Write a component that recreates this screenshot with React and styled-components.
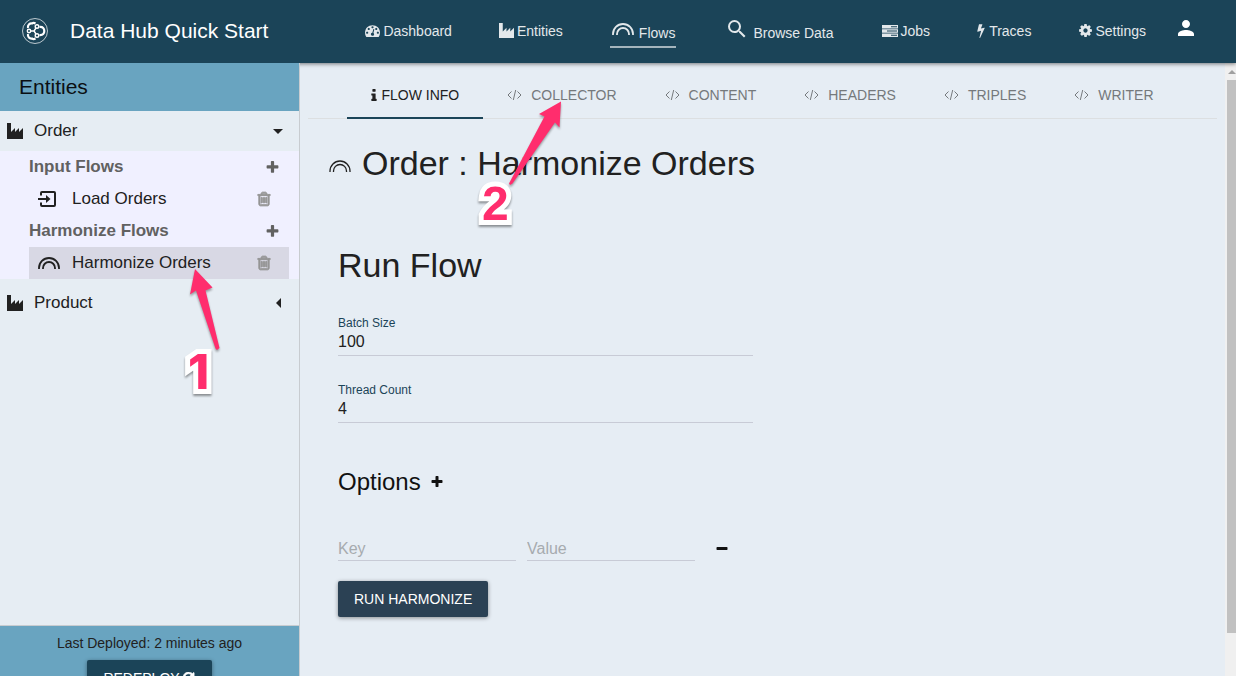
import React from 'react';
import styled, { createGlobalStyle, css } from 'styled-components';
import { MdSearch, MdPerson } from 'react-icons/md';

const GlobalStyle = createGlobalStyle`
  *, *::before, *::after { box-sizing: border-box; }
  body {
    margin: 0;
    background: #e6edf4;
    color: #212121;
    font-family: "Liberation Sans", Arial, sans-serif;
    font-size: 14px;
    overflow: hidden;
  }
  h1, h2, h3, p, ul { margin: 0; padding: 0; font-weight: 400; }
  ul { list-style: none; }
  a { color: inherit; text-decoration: none; }
  button { border: 0; padding: 0; background: none; color: inherit; font: inherit; cursor: pointer; }
  svg { display: block; flex: none; fill: currentColor; }
`;

/* ---------- icons ---------- */

const GLYPHS = {
  refresh:
    'M1511 928q0 5-1 7-64 268-268 434.5t-478 166.5q-146 0-282.5-55t-243.5-157l-129 129q-19 19-45 19t-45-19-19-45v-448q0-26 19-45t45-19h448q26 0 45 19t19 45-19 45l-137 137q71 66 161 102t187 36q134 0 250-65t186-179q11-17 53-117 8-23 30-23h192q13 0 22.5 9.5t9.5 22.5zm25-800v448q0 26-19 45t-45 19h-448q-26 0-45-19t-19-45 19-45l138-138q-148-137-349-137-134 0-250 65t-186 179q-11 17-53 117-8 23-30 23h-199q-13 0-22.5-9.5t-9.5-22.5v-7q65-268 270-434.5t480-166.5q146 0 284 55.5t245 156.5l130-129q19-19 45-19t45 19 19 45z',
  cog:
    'M1152 896q0-106-75-181t-181-75-181 75-75 181 75 181 181 75 181-75 75-181zm512-109v222q0 12-8 23t-20 13l-185 28q-19 54-39 91 35 50 107 138 10 12 10 25t-9 23q-27 37-99 108t-94 71q-12 0-26-9l-138-108q-44 23-91 38-16 136-29 186-7 28-36 28h-222q-14 0-24.5-8.5t-11.5-21.5l-28-184q-49-16-90-37l-141 107q-10 9-25 9-14 0-25-11-126-114-165-168-7-10-7-23 0-12 8-23 15-21 51-66.5t54-70.5q-27-50-41-99l-183-27q-13-2-21-12.5t-8-23.5v-222q0-12 8-23t19-13l186-28q14-46 39-92-40-57-107-138-10-12-10-24 0-10 9-23 26-36 98.5-107.5t94.5-71.5q13 0 26 10l138 107q44-23 91-38 16-136 29-186 7-28 36-28h222q14 0 24.5 8.5t11.5 21.5l28 184q49 16 90 37l142-107q9-9 24-9 13 0 25 10 129 119 165 170 7 8 7 22 0 12-8 23-15 21-51 66.5t-54 70.5q26 50 41 98l183 28q13 2 21 12.5t8 23.5z',
  bolt:
    'M1333 566q18 20 7 44l-540 1157q-13 25-42 25-4 0-14-2-17-5-25.5-19t-4.5-30l197-808-406 101q-4 1-12 1-18 0-31-11-18-15-13-39l201-825q4-14 16-23t28-9h328q19 0 32 12.5t13 29.5q0 8-5 18l-171 463 396-98q8-2 12-2 19 0 34 15z',
  trash:
    'M704 736v576q0 14-9 23t-23 9h-64q-14 0-23-9t-9-23v-576q0-14 9-23t23-9h64q14 0 23 9t9 23zm256 0v576q0 14-9 23t-23 9h-64q-14 0-23-9t-9-23v-576q0-14 9-23t23-9h64q14 0 23 9t9 23zm256 0v576q0 14-9 23t-23 9h-64q-14 0-23-9t-9-23v-576q0-14 9-23t23-9h64q14 0 23 9t9 23zm128 724v-948h-896v948q0 22 7 40.5t14.5 27 10.5 8.5h832q3 0 10.5-8.5t14.5-27 7-40.5zm-672-1076h448l-48-117q-7-9-17-11h-317q-10 2-17 11zm928 32v64q0 14-9 23t-23 9h-96v948q0 83-47 143.5t-113 60.5h-832q-66 0-113-58.5t-47-141.5v-952h-96q-14 0-23-9t-9-23v-64q0-14 9-23t23-9h309l70-167q15-37 54-63t79-26h320q40 0 79 26t54 63l70 167h309q14 0 23 9t9 23z',
  plus:
    'M1600 736v192q0 40-28 68t-68 28h-416v416q0 40-28 68t-68 28h-192q-40 0-68-28t-28-68v-416h-416q-40 0-68-28t-28-68v-192q0-40 28-68t68-28h416v-416q0-40 28-68t68-28h192q40 0 68 28t28 68v416h416q40 0 68 28t28 68z',
  minus:
    'M1600 736v192q0 40-28 68t-68 28h-1216q-40 0-68-28t-28-68v-192q0-40 28-68t68-28h1216q40 0 68 28t28 68z',
  dashboard:
    'M384 1152q0-53-37.5-90.5t-90.5-37.5-90.5 37.5-37.5 90.5 37.5 90.5 90.5 37.5 90.5-37.5 37.5-90.5zm192-448q0-53-37.5-90.5t-90.5-37.5-90.5 37.5-37.5 90.5 37.5 90.5 90.5 37.5 90.5-37.5 37.5-90.5zm428 481l101-382q6-26-7.5-48.5t-38.5-29.5-48 6.5-30 39.5l-101 382q-60 5-107 43.5t-63 98.5q-20 77 20 146t117 89 146-20 89-117q16-60-6-117t-72-91zm660-33q0-53-37.5-90.5t-90.5-37.5-90.5 37.5-37.5 90.5 37.5 90.5 90.5 37.5 90.5-37.5 37.5-90.5zm-640-640q0-53-37.5-90.5t-90.5-37.5-90.5 37.5-37.5 90.5 37.5 90.5 90.5 37.5 90.5-37.5 37.5-90.5zm448 192q0-53-37.5-90.5t-90.5-37.5-90.5 37.5-37.5 90.5 37.5 90.5 90.5 37.5 90.5-37.5 37.5-90.5zm320 448q0 261-141 483-19 29-54 29h-1402q-35 0-54-29-141-221-141-483 0-182 71-348t191-286 286-191 348-71 348 71 286 191 191 286 71 348z',
  info:
    'M1216 1344v128q0 26-19 45t-45 19h-512q-26 0-45-19t-19-45v-128q0-26 19-45t45-19h64v-384h-64q-26 0-45-19t-19-45v-128q0-26 19-45t45-19h384q26 0 45 19t19 45v576h64q26 0 45 19t19 45zm-128-1152v192q0 26-19 45t-45 19h-256q-26 0-45-19t-19-45v-192q0-26 19-45t45-19h256q26 0 45 19t19 45z',
};

const Glyph = ({ name, size = 14, box = '0 0 1792 1792', width = size, bold = 0 }) => (
  <svg width={width} height={size} viewBox={box} aria-hidden="true">
    <path d={GLYPHS[name]} stroke={bold ? 'currentColor' : 'none'} strokeWidth={bold} />
  </svg>
);

const IndustryIcon = ({ size }) => (
  <svg width={size} height={size} viewBox="0 0 16 16" aria-hidden="true">
    <path d="M0 0h4v9l4-4v4l4-4v4l4-4v11H0z" />
  </svg>
);

const ServerIcon = () => (
  <svg width="16" height="14" viewBox="0 0 16 14" aria-hidden="true">
    <path
      fillRule="evenodd"
      d="M0 1h16v3.500H0zM0 5.250h16v3.500H0zM0 9.500h16v3.500H0zM9 2.300v.9h6v-.9zM5 6.550v.9h10v-.9zM9 10.800v.9h6v-.9z"
    />
  </svg>
);

const ArcsIcon = ({ thin = false }) => (
  <svg width="22" height="12" viewBox="0 0 22 12" aria-hidden="true">
    <path
      d={thin ? 'M1 12V11a10 10 0 0 1 20 0V12M4.500 12V11a6.500 6.500 0 0 1 13 0V12' : 'M1 12V11a10 10 0 0 1 20 0V12M5 12V11a6 6 0 0 1 12 0V12'}
      fill="none"
      stroke="currentColor"
      strokeWidth={thin ? 1.3 : 1.8}
    />
  </svg>
);

const ImportIcon = () => (
  <svg width="19" height="16" viewBox="0 0 19 16" aria-hidden="true">
    <path
      d="M3 4.500V2q0-1 1-1h12q1 0 1 1v12q0 1-1 1H4q-1 0-1-1v-2.500M0 8h10"
      fill="none"
      stroke="currentColor"
      strokeWidth="2"
    />
    <path d="M8 4l4.500 4L8 12z" />
  </svg>
);

const CodeIcon = () => (
  <svg width="15" height="10" viewBox="0 0 15 10" aria-hidden="true">
    <path d="M4.500 1.500L1 5l3.500 3.500M10.500 1.500L14 5l-3.500 3.500M8.700 0L6.300 10" fill="none" stroke="currentColor" />
  </svg>
);

const LogoIcon = () => (
  <svg width="28" height="28" viewBox="0 0 28 28" aria-hidden="true">
    <circle cx="14" cy="14" r="12.500" fill="none" stroke="currentColor" opacity="0.7" />
    <g fill="none" stroke="currentColor" strokeWidth="2.200">
      <path d="M7 11C6.500 8 8.500 6.200 11 6.500q1.500-1.200 3.500 0" />
      <path d="M7 17c-.5 3 1.500 4.800 4 4.500q1.500 1.200 3.500 0" />
      <path d="M18.500 10c3.500-.3 4.800 1.500 4.800 4s-1.300 4.300-4.800 4" />
    </g>
    <g fill="none" stroke="currentColor" strokeWidth="1.400">
      <circle cx="8" cy="14" r="1.700" />
      <circle cx="16" cy="9.500" r="1.800" />
      <circle cx="16" cy="18.500" r="1.800" />
      <path d="M9.700 14h3.300l2-3M13 14l2 3" />
    </g>
  </svg>
);

/* ---------- layout ---------- */

const Page = styled.div`
  display: flex;
  flex-direction: column;
  height: 100vh;
`;

const Header = styled.header`
  position: relative;
  z-index: 1;
  display: flex;
  align-items: center;
  flex: none;
  height: 63px;
  padding: 0 38px 2px 21px;
  background: #1b4458;
  color: #fff;
  box-shadow: 0 1px 4px rgba(0, 0, 0, 0.5);
`;

const Brand = styled.a`
  display: flex;
  align-items: center;
  gap: 21px;
  font-size: 21px;
  line-height: 24px;
  white-space: nowrap;
`;

const Nav = styled.nav`
  display: flex;
  align-items: center;
  gap: 47px;
  margin-left: auto;
  margin-right: 28px;
`;

const NavLink = styled.a`
  display: flex;
  align-items: center;
  gap: ${(p) => p.$gap || 3}px;
  color: #e3e8eb;
  line-height: 20px;
  white-space: nowrap;
  ${(p) =>
    p.$raised &&
    css`
      margin-top: 4px;
      padding: 5px 1px 3px 2px;
      border-bottom: 2px solid ${p.$active ? '#a4b4bc' : 'transparent'};
      svg { margin-bottom: 8px; }
    `}
`;

const UserButton = styled.button`
  padding-bottom: 6px;
`;

const Body = styled.div`
  display: flex;
  flex: 1;
  min-height: 0;
`;

const Sidebar = styled.aside`
  position: relative;
  z-index: 2;
  display: flex;
  flex-direction: column;
  flex: none;
  width: 300px;
  border-right: 1px solid #c8ccd0;
  background: #e6edf3;
`;

const SidebarTitle = styled.h2`
  padding: 0 19px;
  background: #69a4c0;
  color: #0b0f12;
  font-size: 21px;
  line-height: 48px;
`;

const Entities = styled.div`
  flex: 1;
  min-height: 0;
`;

const EntityRow = styled.button`
  display: flex;
  align-items: center;
  gap: 11px;
  width: 100%;
  height: 40px;
  padding: 0 16px 0 7px;
  font-size: 17px;
  text-align: left;
`;

const Caret = styled.span`
  margin-left: auto;
  border: 5px solid transparent;
  ${(p) =>
    p.$open
      ? 'border-top-color: currentColor; border-bottom-width: 0;'
      : 'border-right-color: currentColor; border-left-width: 0; margin-right: 2px;'}
`;

const FlowGroup = styled.div`
  margin-bottom: 4px;
  padding: 0 10px 0 29px;
  background: #f0f0ff;
  font-size: 17px;
`;

const FlowHeading = styled.h3`
  display: flex;
  align-items: center;
  justify-content: space-between;
  height: 32px;
  padding-right: 9px;
  color: #616161;
  font-size: 17px;
  font-weight: 700;
`;

const FlowRow = styled.div`
  display: flex;
  align-items: center;
  height: 32px;
  padding: 0 17px 0 9px;
  background: ${(p) => (p.$selected ? '#d8d8e4' : 'transparent')};
`;

const FlowLink = styled.a`
  display: flex;
  align-items: center;
  flex: 1;
`;

const FlowIcon = styled.span`
  width: 34px;
`;

const TrashButton = styled.button`
  color: #959595;
`;

const Deploy = styled.footer`
  display: flex;
  flex-direction: column;
  align-items: center;
  flex: none;
  gap: 9px;
  height: 51px;
  padding-top: 9px;
  border-top: 1px solid #c8ccd0;
  background: #69a4c0;
  line-height: 16px;
  overflow: hidden;
`;

const ActionButton = styled.button`
  display: flex;
  align-items: center;
  justify-content: center;
  flex: none;
  gap: 3px;
  height: 36px;
  padding: 0 16px;
  border-radius: 2px;
  background: ${(p) => p.$tone};
  color: #fff;
  font-weight: 500;
  box-shadow: 0 1px 4px rgba(0, 0, 0, 0.4);
`;

const Main = styled.main`
  flex: 1;
  min-width: 0;
  padding: 8px 8px 0;
  overflow: hidden;
`;

const Tabs = styled.nav`
  display: flex;
  justify-content: center;
  height: 48px;
  border-bottom: 1px solid #dcdfe1;
`;

const Tab = styled.a`
  display: flex;
  align-items: center;
  gap: ${(p) => (p.$active ? 4 : 9)}px;
  height: 48px;
  padding: 0 24px;
  color: ${(p) => (p.$active ? '#212121' : '#75797c')};
  white-space: nowrap;
  box-shadow: ${(p) => (p.$active ? 'inset 0 -2px #1b4458' : 'none')};
`;

const Title = styled.h1`
  display: flex;
  align-items: center;
  gap: 11px;
  margin: 24px 0 0 21px;
  font-size: 34px;
  line-height: 40px;
  svg { margin-top: 5px; }
`;

const Form = styled.form`
  display: flex;
  flex-direction: column;
  align-items: flex-start;
  max-width: 445px;
  margin-top: 62px;
  padding-left: 30px;
`;

const FormTitle = styled.h2`
  margin-bottom: 30px;
  font-size: 34px;
  line-height: 40px;
`;

const Field = styled.div`
  display: flex;
  flex-direction: column;
  width: 100%;
  margin-bottom: 26px;
`;

const Label = styled.label`
  color: #1b4458;
  font-size: 12px;
  line-height: 16px;
`;

const Input = styled.input`
  width: 100%;
  min-width: 0;
  height: 25px;
  padding: ${(p) => (p.$option ? '2px 0 0' : '0 0 2px')};
  border: 0;
  border-bottom: 1px solid #c8cbd6;
  border-radius: 0;
  outline: 0;
  background: transparent;
  color: #212121;
  font: inherit;
  font-size: 16px;
  &::placeholder { color: #a6abaf; opacity: 1; }
`;

const OptionsTitle = styled.h3`
  display: flex;
  align-items: center;
  gap: 9px;
  margin-top: 17px;
  font-size: 24px;
  line-height: 32px;
  color: #111;
`;

const OptionRow = styled.div`
  display: grid;
  grid-template-columns: 178fr 168fr 47fr;
  column-gap: 11px;
  align-items: center;
  width: 100%;
  margin: 38px 0 20px;
`;

const RemoveButton = styled.button`
  justify-self: start;
  margin-left: 9px;
  color: #111;
`;

const Scrollbar = styled.div`
  display: flex;
  flex-direction: column;
  flex: none;
  width: 11px;
  padding: 0 0 43px 2px;
  background: #f0f0f0;
`;

const ScrollArrow = styled.span`
  align-self: center;
  margin: 7px 0 6px;
  border: 4px solid transparent;
  border-top-width: 0;
  border-bottom-color: #a0a0a0;
`;

const ScrollThumb = styled.span`
  flex: 1;
  background: #c1c1c1;
`;

/* ---------- tutorial callouts laid over the page ---------- */

const CalloutArrows = styled.svg`
  position: absolute;
  z-index: 3;
  left: 0;
  top: 0;
  pointer-events: none;
  filter: drop-shadow(0 2px 1px rgba(0, 0, 0, 0.35));
`;

const CalloutNumber = styled.span`
  position: absolute;
  z-index: 4;
  left: ${(p) => p.$x}px;
  top: ${(p) => p.$y}px;
  color: #ff2d6d;
  font-family: ${(p) => p.$face};
  font-size: 48px;
  font-weight: 800;
  line-height: 48px;
  -webkit-text-stroke: 10px #fff;
  paint-order: stroke fill;
  stroke-linejoin: round;
  filter: drop-shadow(0 2px 1px rgba(0, 0, 0, 0.4));
  pointer-events: none;
`;

const CODE_TABS = ['COLLECTOR', 'CONTENT', 'HEADERS', 'TRIPLES', 'WRITER'];

const FlowItem = ({ icon, name, selected }) => (
  <FlowRow $selected={selected}>
    <FlowLink href="#flow">
      <FlowIcon>{icon}</FlowIcon>
      {name}
    </FlowLink>
    <TrashButton aria-label={`Delete ${name}`}>
      <Glyph name="trash" size={16} bold={110} />
    </TrashButton>
  </FlowRow>
);

const FlowSection = ({ title }) => (
  <FlowHeading>
    {title}
    <button aria-label={`Add to ${title}`}>
      <Glyph name="plus" size={15} />
    </button>
  </FlowHeading>
);

export default function App() {
  return (
    <Page>
      <GlobalStyle />
      <Header>
        <Brand href="#home">
          <LogoIcon />
          Data Hub Quick Start
        </Brand>
        <Nav>
          <NavLink href="#dashboard"><Glyph name="dashboard" size={15} />Dashboard</NavLink>
          <NavLink href="#entities"><IndustryIcon size={15} />Entities</NavLink>
          <NavLink href="#flows" $raised $active $gap={5}><ArcsIcon />Flows</NavLink>
          <NavLink href="#browse" $raised $gap={4}><MdSearch size={24} />Browse Data</NavLink>
          <NavLink href="#jobs"><ServerIcon />Jobs</NavLink>
          <NavLink href="#traces" $gap={4}><Glyph name="bolt" size={14} width={8} box="450 100 900 1700" />Traces</NavLink>
          <NavLink href="#settings" $gap={2}><Glyph name="cog" size={15} />Settings</NavLink>
        </Nav>
        <UserButton aria-label="User"><MdPerson size={24} /></UserButton>
      </Header>

      <Body>
        <Sidebar>
          <SidebarTitle>Entities</SidebarTitle>
          <Entities>
            <EntityRow><IndustryIcon size={16} />Order<Caret $open /></EntityRow>
            <FlowGroup>
              <FlowSection title="Input Flows" />
              <FlowItem icon={<ImportIcon />} name="Load Orders" />
              <FlowSection title="Harmonize Flows" />
              <FlowItem icon={<ArcsIcon />} name="Harmonize Orders" selected />
            </FlowGroup>
            <EntityRow><IndustryIcon size={16} />Product<Caret /></EntityRow>
          </Entities>
          <Deploy>
            <p>Last Deployed: 2 minutes ago</p>
            <ActionButton $tone="#1b4458">REDEPLOY<Glyph name="refresh" size={13} bold={80} /></ActionButton>
          </Deploy>
        </Sidebar>

        <Main>
          <Tabs>
            <Tab href="#info" $active>
              <Glyph name="info" size={14} width={6} box="576 0 640 1664" />
              FLOW INFO
            </Tab>
            {CODE_TABS.map((t) => (
              <Tab key={t} href={`#${t}`}><CodeIcon />{t}</Tab>
            ))}
          </Tabs>
          <Title><ArcsIcon thin />Order : Harmonize Orders</Title>
          <Form onSubmit={(e) => e.preventDefault()}>
            <FormTitle>Run Flow</FormTitle>
            <Field>
              <Label htmlFor="batch">Batch Size</Label>
              <Input id="batch" defaultValue="100" />
            </Field>
            <Field>
              <Label htmlFor="threads">Thread Count</Label>
              <Input id="threads" defaultValue="4" />
            </Field>
            <OptionsTitle>
              Options
              <button type="button" aria-label="Add option"><Glyph name="plus" size={14} /></button>
            </OptionsTitle>
            <OptionRow>
              <Input $option aria-label="Key" placeholder="Key" />
              <Input $option aria-label="Value" placeholder="Value" />
              <RemoveButton type="button" aria-label="Remove option"><Glyph name="minus" size={14} /></RemoveButton>
            </OptionRow>
            <ActionButton $tone="#2b4154">RUN HARMONIZE</ActionButton>
          </Form>
        </Main>

        <Scrollbar aria-hidden="true">
          <ScrollArrow />
          <ScrollThumb />
        </Scrollbar>
      </Body>

      <CalloutArrows width="600" height="400" aria-hidden="true">
        <g fill="#ff2d6d">
          <path d="M195 269L212.500 287.500 205.500 290.500 219.500 348 217 350 215.500 348.500 196 290.500 190 294.500z" />
          <path d="M561 101.500L559.500 127.500 555 122.500 512.500 183.500 510 185 509 183.500 544.500 116.500 539 114z" />
        </g>
      </CalloutArrows>
      <CalloutNumber $x={188} $y={348} $face={'Inter, sans-serif'}>1</CalloutNumber>
      <CalloutNumber $x={482} $y={180} $face={'"Liberation Sans", sans-serif'}>2</CalloutNumber>
    </Page>
  );
}
